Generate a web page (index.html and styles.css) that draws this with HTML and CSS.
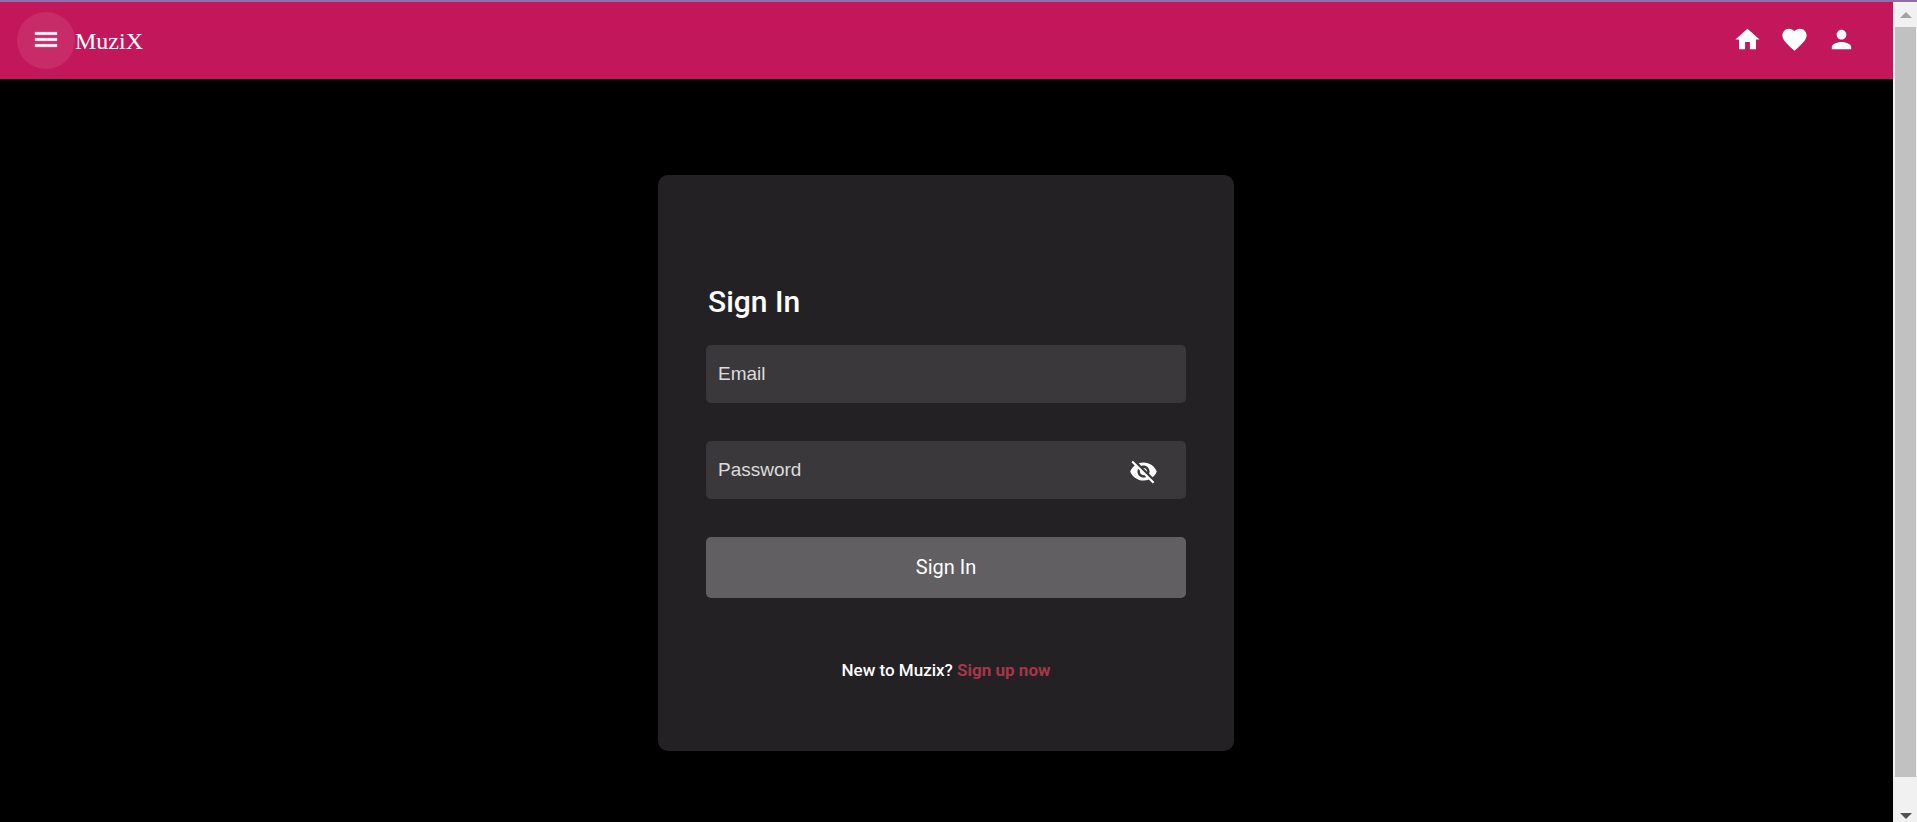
FILE: index.html
```html
<!DOCTYPE html>
<html lang="en">
<head>
<meta charset="utf-8">
<title>MuziX</title>
<link rel="stylesheet" href="styles.css">
</head>
<body>
<div class="window">
  <div class="page">
    <header class="toolbar">
      <button class="menu-button" type="button" aria-label="Menu">
        <svg class="icon" viewBox="0 0 24 24"><path d="M3 18h18v-2H3v2zm0-5h18v-2H3v2zm0-7v2h18V6H3z" transform="translate(-.4 0)" stroke="currentColor" stroke-width=".4"/></svg>
      </button>
      <span class="brand">MuziX</span>
      <nav class="links">
        <a href="#home" aria-label="Home"><svg class="icon" viewBox="0 0 24 24"><path d="M10 20v-6h4v6h5v-8h3L12 3 2 12h3v8z"/></svg></a>
        <a href="#favorites" aria-label="Favorites"><svg class="icon" viewBox="0 0 24 24"><path d="M12 21.35l-1.45-1.32C5.4 15.36 2 12.28 2 8.5 2 5.42 4.42 3 7.5 3c1.74 0 3.41.81 4.5 2.09C13.09 3.81 14.76 3 16.5 3 19.58 3 22 5.42 22 8.5c0 3.78-3.4 6.86-8.55 11.54L12 21.35z"/></svg></a>
        <a href="#profile" aria-label="Profile"><svg class="icon" viewBox="0 0 24 24"><path d="M12 12c2.21 0 4-1.79 4-4s-1.79-4-4-4-4 1.79-4 4 1.79 4 4 4zm0 2c-2.67 0-8 1.34-8 4v2h16v-2c0-2.66-5.33-4-8-4z"/></svg></a>
      </nav>
    </header>
    <main class="content">
      <form class="card">
        <h1 class="title">Sign In</h1>
        <div class="field">
          <input class="input" type="email" placeholder="Email" aria-label="Email">
        </div>
        <div class="field">
          <input class="input" type="password" placeholder="Password" aria-label="Password">
          <button class="toggle" type="button" aria-label="Show password">
            <svg class="icon" viewBox="0 0 24 24"><path d="M12 7c2.76 0 5 2.24 5 5 0 .65-.13 1.26-.36 1.83l2.92 2.92c1.51-1.26 2.7-2.89 3.43-4.75-1.73-4.39-6-7.5-11-7.5-1.4 0-2.74.25-3.98.7l2.16 2.16C10.74 7.13 11.35 7 12 7zM2 4.27l2.28 2.28.46.46C3.08 8.3 1.78 10.02 1 12c1.73 4.39 6 7.5 11 7.5 1.55 0 3.03-.3 4.38-.84l.42.42L19.73 22 21 20.73 3.27 3 2 4.27zM7.53 9.8l1.55 1.55c-.05.21-.08.43-.08.65 0 1.66 1.34 3 3 3 .22 0 .44-.03.65-.08l1.55 1.55c-.67.33-1.41.53-2.2.53-2.76 0-5-2.24-5-5 0-.79.2-1.53.53-2.2zm4.31-.78l3.15 3.15.02-.16c0-1.66-1.34-3-3-3l-.17.01z"/></svg>
          </button>
        </div>
        <button class="submit" type="button">Sign In</button>
        <p class="signup">New to Muzix? <a class="signup-link" href="#signup">Sign up now</a></p>
      </form>
    </main>
  </div>
  <div class="scrollbar" aria-hidden="true">
    <svg class="arrow arrow-up" viewBox="0 0 12 6"><path d="M0 6L6 0l6 6z"/></svg>
    <div class="thumb"></div>
    <svg class="arrow arrow-down" viewBox="0 0 12 6"><path d="M0 0l6 6 6-6z"/></svg>
  </div>
</div>
</body>
</html>
```
FILE: styles.css
```css
* {
  box-sizing: border-box;
}

body {
  margin: 0;
  background: #000;
  color: #fff;
  font-family: Roboto, "Liberation Sans", sans-serif;
}

button {
  border: 0;
  padding: 0;
  color: inherit;
  cursor: pointer;
}

a {
  color: inherit;
}

.window {
  display: flex;
  min-height: 100vh;
  border-top: 2px solid #8e6fa9;
}

.page {
  flex: 1;
  display: flex;
  flex-direction: column;
}

.icon {
  display: block;
  width: 29px;
  height: 29px;
  fill: currentColor;
}

.toolbar {
  display: flex;
  align-items: center;
  height: 77px;
  padding: 0 37px 0 17px;
  background: #c2185b;
}

.menu-button {
  display: grid;
  place-items: center;
  width: 58px;
  height: 57px;
  padding-bottom: 2px;
  border-radius: 50%;
  background: #c72b68;
}

.brand {
  font: 24px/28px "Liberation Serif", serif;
}

.links {
  display: flex;
  gap: 18px;
  margin-left: auto;
  padding-bottom: 2px;
}

.content {
  display: flex;
  justify-content: center;
  padding: 96px 25px 68px 24px;
}

.card {
  display: flex;
  flex-direction: column;
  width: 100%;
  max-width: 576px;
  padding: 108px 48px 69px;
  border-radius: 10px;
  background: #232124;
}

.title {
  margin: 0 0 24px;
  padding-left: 2px;
  font-size: 30px;
  line-height: 38px;
  font-weight: 500;
}

.field {
  display: flex;
  align-items: center;
  height: 58px;
  margin-bottom: 38px;
  padding: 0 28px 0 12px;
  border-radius: 5px;
  background: #3a383b;
}

.input {
  flex: 1;
  min-width: 0;
  padding: 0;
  border: 0;
  outline: 0;
  background: transparent;
  color: #fff;
  font: 19px/24px "Liberation Sans", Arial, sans-serif;
}

.input::placeholder {
  color: #dcdcdc;
  opacity: 1;
}

.toggle {
  padding-top: 2px;
  background: transparent;
}

.submit {
  height: 61px;
  padding-bottom: 2px;
  border-radius: 5px;
  background: #615f62;
  font: 20px/24px Roboto, sans-serif;
}

.signup {
  margin: 60px 0 0;
  font-size: 17px;
  line-height: 24px;
  font-weight: 500;
  text-align: center;
}

.signup-link {
  color: #a6364a;
  font-weight: 700;
  text-decoration: none;
}

.scrollbar {
  display: flex;
  flex-direction: column;
  align-items: center;
  width: 24px;
  padding: 10px 1px 3px 2px;
  background: #f1f1f1;
}

.arrow {
  width: 12px;
  height: 6px;
}

.arrow-up {
  margin-bottom: 9px;
  fill: #a3a3a3;
}

.arrow-down {
  margin-top: 36px;
  fill: #505050;
}

.thumb {
  flex: 1;
  width: 100%;
  background: #c1c1c1;
}
```
